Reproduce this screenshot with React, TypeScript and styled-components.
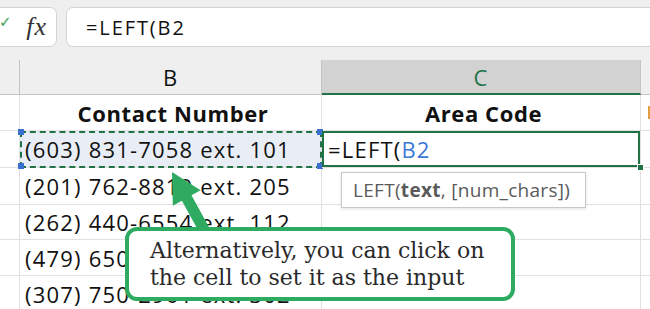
import React from "react";
import styled, { createGlobalStyle } from "styled-components";

const GlobalStyle = createGlobalStyle`
  html, body { margin: 0; padding: 0; background: #ffffff; }
  body { overflow: hidden; }
  * { box-sizing: border-box; }
`;

const Page = styled.div`
  position: relative;
  width: 650px;
  height: 309px;
  overflow: hidden;
  background: #ffffff;
  font-family: "Open Sans", "Noto Sans", sans-serif;
`;

const TopArea = styled.div`
  display: flex;
  gap: 9px;
  padding: 7px 0 13px;
  background: #efefef;
`;

const FxBox = styled.div`
  flex: 0 0 77px;
  height: 40px;
  margin-left: -20px;
  display: flex;
  align-items: center;
  justify-content: space-between;
  padding: 0 9px 0 20px;
  background: #ffffff;
  border: 1px solid #d4d4d4;
  border-radius: 7px;
`;

const Check = styled.span`
  color: #3aa35c;
  font-size: 15px;
  margin-top: -10px;
  margin-left: -2px;
  font-family: "DejaVu Sans", sans-serif;
`;

const Fx = styled.span`
  font-family: "Liberation Serif", serif;
  font-style: italic;
  font-size: 26px;
  color: #333333;
  letter-spacing: 1px;
`;

const FormulaInput = styled.div`
  flex: 1;
  height: 40px;
  margin-right: -20px;
  display: flex;
  align-items: center;
  padding-left: 19px;
  background: #ffffff;
  border: 1px solid #d4d4d4;
  border-radius: 7px;
  font-size: 20px;
  letter-spacing: 1.9px;
  color: #111111;
`;

const Grid = styled.div`
  display: grid;
  grid-template-columns: 20px 302px 319px 1fr;
  grid-template-rows: 35px 36px 37px 37px 35px 36px 36px;
`;

const HeadCell = styled.div<{ $active?: boolean }>`
  display: flex;
  align-items: center;
  justify-content: center;
  background: ${(p) => (p.$active ? "#d2d2d2" : "#efefef")};
  color: ${(p) => (p.$active ? "#217346" : "#111111")};
  border-right: 1px solid #c4c4c4;
  border-bottom: ${(p) => (p.$active ? "2px solid #217346" : "1px solid #c4c4c4")};
  font-size: 22px;
  letter-spacing: 1px;
`;

const Cell = styled.div<{ $bold?: boolean; $center?: boolean }>`
  position: relative;
  display: flex;
  align-items: center;
  justify-content: ${(p) => (p.$center ? "center" : "flex-start")};
  padding-left: 5px;
  border-right: 1px solid #e1e1e1;
  border-bottom: 1px solid #e1e1e1;
  font-size: 22px;
  font-weight: ${(p) => (p.$bold ? 700 : 400)};
  letter-spacing: ${(p) => (p.$bold ? "0.6px" : "1.2px")};
  color: #111111;
  white-space: nowrap;
`;

const RefCell = styled(Cell)`
  background: #e8edf6;
  outline: 2px dashed #217346;
  outline-offset: -2px;
  overflow: visible;
  z-index: 2;
`;

const Handle = styled.span<{ $pos: "tl" | "tr" | "bl" | "br" }>`
  position: absolute;
  width: 6px;
  height: 6px;
  background: #3b6fd0;
  ${(p) => (p.$pos[0] === "t" ? "top: -2px;" : "bottom: -2px;")}
  ${(p) => (p.$pos[1] === "l" ? "left: -2px;" : "right: -2px;")}
`;

const ActiveCell = styled(Cell)`
  box-shadow: inset 0 0 0 2px #217346;
  padding-left: 6px;
  z-index: 3;
`;

const FillHandle = styled.span`
  position: absolute;
  right: -4px;
  bottom: -4px;
  width: 7px;
  height: 7px;
  background: #217346;
  border: 1px solid #ffffff;
`;

const RefText = styled.span`
  color: #3c78d8;
`;

const OrangeMark = styled.span`
  display: block;
  width: 4px;
  height: 13px;
  margin-left: 2px;
  background: #e39d3c;
`;

const Tooltip = styled.div`
  position: absolute;
  left: 341px;
  top: 172px;
  width: 245px;
  height: 36px;
  display: flex;
  align-items: center;
  padding-left: 11px;
  background: #ffffff;
  border: 1px solid #c8c8c8;
  box-shadow: 0 1px 3px rgba(0, 0, 0, 0.12);
  font-size: 19px;
  letter-spacing: 0.3px;
  color: #5a5a5a;
  z-index: 4;
  white-space: nowrap;
`;

const Arrow = styled.svg`
  position: absolute;
  left: 160px;
  top: 165px;
  z-index: 5;
`;

const Callout = styled.div`
  position: absolute;
  left: 125px;
  top: 227px;
  width: 390px;
  height: 74px;
  display: flex;
  flex-direction: column;
  justify-content: center;
  padding-left: 21px;
  background: #ffffff;
  border: 4px solid #2fab61;
  border-radius: 12px;
  font-family: "DejaVu Serif", "Liberation Serif", serif;
  font-size: 22px;
  line-height: 27px;
  color: #2a2a2a;
  z-index: 6;
  white-space: nowrap;
`;

const rows = [
  "(201) 762-8819 ext. 205",
  "(262) 440-6554 ext. 112",
  "(479) 650-3321 ext. 407",
  "(307) 750-2961 ext. 302",
];

export default function App() {
  return (
    <Page>
      <GlobalStyle />
      <TopArea>
        <FxBox>
          <Check>✓</Check>
          <Fx>fx</Fx>
        </FxBox>
        <FormulaInput>=LEFT(B2</FormulaInput>
      </TopArea>
      <Grid>
        <HeadCell />
        <HeadCell>B</HeadCell>
        <HeadCell $active>C</HeadCell>
        <HeadCell />

        <Cell />
        <Cell $bold $center>Contact Number</Cell>
        <Cell $bold $center>Area Code</Cell>
        <Cell>
          <OrangeMark />
        </Cell>

        <Cell />
        <RefCell>
          (603) 831-7058 ext. 101
          <Handle $pos="tl" />
          <Handle $pos="tr" />
          <Handle $pos="bl" />
          <Handle $pos="br" />
        </RefCell>
        <ActiveCell>
          =LEFT(<RefText>B2</RefText>
          <FillHandle />
        </ActiveCell>
        <Cell />

        {rows.map((r) => (
          <React.Fragment key={r}>
            <Cell />
            <Cell>{r}</Cell>
            <Cell />
            <Cell />
          </React.Fragment>
        ))}
      </Grid>
      <Tooltip>
        LEFT(<b>text</b>, [num_chars])
      </Tooltip>
      <Arrow width="60" height="75" viewBox="0 0 60 75">
        <polygon
          points="12,7 40.6,25.2 31.5,30.3 51.8,67.3 42.2,72.7 21.9,35.7 12.8,40.8"
          fill="#2fab61"
        />
      </Arrow>
      <Callout>
        <span>Alternatively, you can click on</span>
        <span>the cell to set it as the input</span>
      </Callout>
    </Page>
  );
}
